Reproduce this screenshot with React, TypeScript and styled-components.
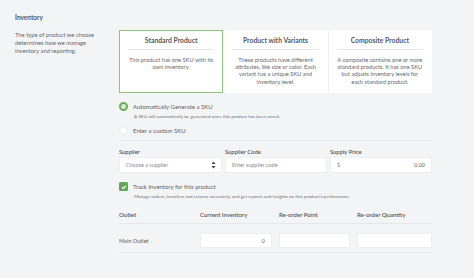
import React from 'react';
import styled, { createGlobalStyle } from 'styled-components';

const GlobalStyle = createGlobalStyle`
  body {
    margin: 0;
    background: #f3f4f6;
    font-family: Lato, "Open Sans", sans-serif;
    color: #5d5f63;
  }
`;

const productTypes = [
  {
    title: 'Standard Product',
    text: 'This product has one SKU with its own inventory.',
  },
  {
    title: 'Product with Variants',
    text: 'These products have different attributes, like size or color. Each variant has a unique SKU and inventory level.',
  },
  {
    title: 'Composite Product',
    text: 'A composite contains one or more standard products. It has one SKU but adjusts inventory levels for each standard product.',
  },
];

const App: React.FC = () => {
  return (
    <>
      <GlobalStyle />
      <Page>
        <Sidebar>
          <Heading>Inventory</Heading>
          <Description>
            The type of product we choose determines how we manage inventory and reporting.
          </Description>
        </Sidebar>
        <Main>
          <TypeCards>
            {productTypes.map((t, idx) => (
              <TypeCard key={t.title} $selected={idx === 0} $last={idx === productTypes.length - 1}>
                <CardTitle>{t.title}</CardTitle>
                <CardRule />
                <CardText>{t.text}</CardText>
              </TypeCard>
            ))}
          </TypeCards>

          <OptionRow>
            <Radio $checked />
            <OptionLabel>Automatically Generate a SKU</OptionLabel>
          </OptionRow>
          <HelpText>A SKU will automatically be generated once this product has been saved.</HelpText>
          <OptionRow $gap={6}>
            <Radio />
            <OptionLabel>Enter a custom SKU</OptionLabel>
          </OptionRow>

          <Divider />

          <FieldRow>
            <Field>
              <FieldLabel>Supplier</FieldLabel>
              <Input>
                <Placeholder>Choose a supplier</Placeholder>
                <SelectArrows>
                  <svg width="5" height="8" viewBox="0 0 5 8">
                    <path d="M2.5 0.5 L4.5 3 H0.5 Z M2.5 7.5 L4.5 5 H0.5 Z" fill="#444" />
                  </svg>
                </SelectArrows>
              </Input>
            </Field>
            <Field>
              <FieldLabel>Supplier Code</FieldLabel>
              <Input>
                <Placeholder>Enter supplier code</Placeholder>
              </Input>
            </Field>
            <Field>
              <FieldLabel>Supply Price</FieldLabel>
              <Input>
                <Placeholder>$</Placeholder>
                <Value>0.00</Value>
              </Input>
            </Field>
          </FieldRow>

          <CheckRow>
            <Checkbox>
              <svg width="6" height="6" viewBox="0 0 6 6">
                <path d="M1 3.2 L2.4 4.6 L5 1.6" stroke="#fff" strokeWidth="1.2" fill="none" />
              </svg>
            </Checkbox>
            <OptionLabel>Track Inventory for this product</OptionLabel>
          </CheckRow>
          <HelpText>
            Manage orders, transfers and returns accurately, and get reports and insights on this product’s performance.
          </HelpText>

          <OutletTable>
            <HeadCell>Outlet</HeadCell>
            <HeadCell>Current Inventory</HeadCell>
            <HeadCell>Re-order Point</HeadCell>
            <HeadCell>Re-order Quantity</HeadCell>
            <TableRule />
            <OutletName>Main Outlet</OutletName>
            <Input $small><Value>0</Value></Input>
            <Input $small />
            <Input $small />
            <TableRule />
          </OutletTable>
        </Main>
      </Page>
    </>
  );
};

export default App;

const Page = styled.div`
  display: flex;
  padding: 14px 0 0 15px;
`;

const Sidebar = styled.div`
  width: 104px;
`;

const Heading = styled.div`
  font-size: 6.5px;
  font-weight: 700;
  line-height: 8px;
  color: #55575b;
`;

const Description = styled.div`
  margin-top: 9px;
  width: 82px;
  font-size: 5.8px;
  line-height: 8px;
  color: #66686c;
`;

const Main = styled.div`
  width: 313px;
  padding-top: 16px;
`;

const TypeCards = styled.div`
  display: flex;
  height: 63px;
  background: #fff;
`;

const TypeCard = styled.div<{ $selected?: boolean; $last?: boolean }>`
  flex: 1;
  box-sizing: border-box;
  padding: 5px 8px 0;
  text-align: center;
  border: 1px solid ${(p) => (p.$selected ? '#8cc47e' : 'transparent')};
  border-left-color: ${(p) => (p.$selected ? '#8cc47e' : p.$last ? '#eceef0' : 'transparent')};
`;

const CardTitle = styled.div`
  font-size: 6.8px;
  font-weight: 700;
  line-height: 9px;
  color: #55575b;
`;

const CardRule = styled.div`
  height: 1px;
  background: #e6e8ea;
  margin: 4px 0 6px;
`;

const CardText = styled.div`
  font-size: 5.7px;
  line-height: 7.2px;
  color: #66686c;
`;

const OptionRow = styled.div<{ $gap?: number }>`
  display: flex;
  align-items: center;
  height: 10px;
  margin-top: ${(p) => p.$gap ?? 8}px;
`;

const Radio = styled.span<{ $checked?: boolean }>`
  box-sizing: border-box;
  width: 9px;
  height: 9px;
  border-radius: 50%;
  background: ${(p) => (p.$checked ? '#d9ecd3' : '#fff')};
  border: ${(p) => (p.$checked ? '2.5px solid #68ad57' : '1px solid #e4e6e8')};
`;

const OptionLabel = styled.span`
  margin-left: 5px;
  font-size: 6px;
  color: #5d5f63;
`;

const HelpText = styled.div`
  margin: 2px 0 0 15px;
  font-size: 4.6px;
  line-height: 6px;
  color: #6e7074;
`;

const Divider = styled.div`
  height: 1px;
  background: #e5e7ea;
  margin-top: 5px;
`;

const FieldRow = styled.div`
  display: grid;
  grid-template-columns: 103px 102px 102px;
  column-gap: 3px;
  margin-top: 7px;
`;

const Field = styled.div`
  display: flex;
  flex-direction: column;
`;

const FieldLabel = styled.div`
  font-size: 5.8px;
  font-weight: 600;
  line-height: 7px;
  color: #55575b;
  margin-bottom: 2px;
`;

const Input = styled.div<{ $small?: boolean }>`
  box-sizing: border-box;
  display: flex;
  align-items: center;
  justify-content: space-between;
  height: ${(p) => (p.$small ? 15 : 16)}px;
  padding: 0 6px;
  background: #fff;
  border: 1px solid #eceef0;
  font-size: 5.4px;
`;

const Placeholder = styled.span`
  color: #8a8c90;
`;

const Value = styled.span`
  margin-left: auto;
  color: #5d5f63;
`;

const SelectArrows = styled.span`
  display: flex;
  margin-right: -1px;
`;

const CheckRow = styled.div`
  display: flex;
  align-items: center;
  margin-top: 9px;
`;

const Checkbox = styled.span`
  display: flex;
  align-items: center;
  justify-content: center;
  width: 9px;
  height: 9px;
  border-radius: 1.5px;
  background: #62a852;
`;

const OutletTable = styled.div`
  display: grid;
  grid-template-columns: 74px 72px 71px 75px;
  column-gap: 7px;
  align-items: center;
  margin-top: 12px;
`;

const HeadCell = styled.div`
  font-size: 6px;
  font-weight: 600;
  line-height: 8px;
  color: #55575b;
`;

const TableRule = styled.div`
  grid-column: 1 / -1;
  height: 1px;
  background: #e5e7ea;
  margin: 4px 0 9px;
`;

const OutletName = styled.div`
  font-size: 5.6px;
  color: #5d5f63;
`;
